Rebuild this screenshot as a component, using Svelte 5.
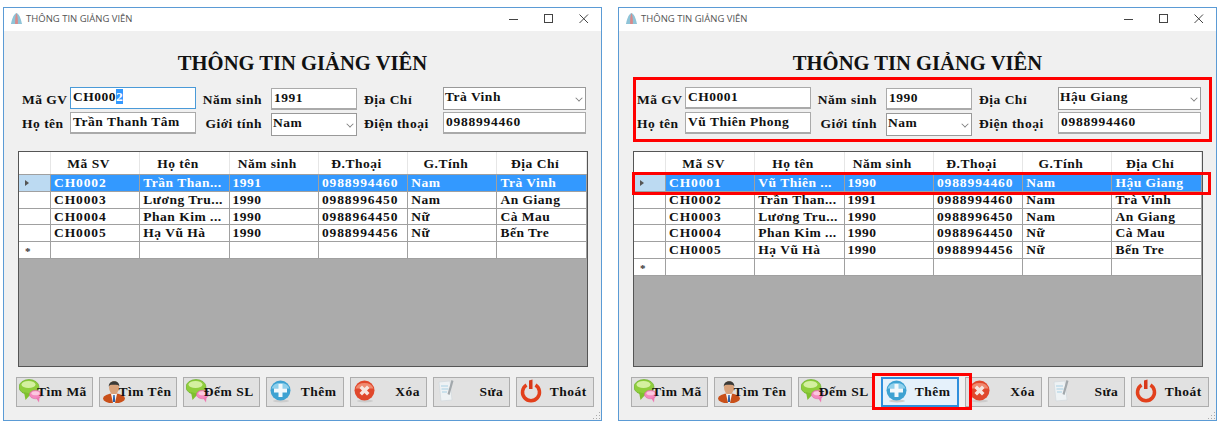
<script lang="ts">
    // Columns of the student grid
    const columns = ["Mã SV", "Họ tên", "Năm sinh", "Đ.Thoại", "G.Tính", "Địa Chỉ"];

    const rowsA = [
        ["CH0002", "Trần Than...", "1991", "0988994460", "Nam", "Trà Vinh"],
        ["CH0003", "Lương Tru...", "1990", "0988996450", "Nam", "An Giang"],
        ["CH0004", "Phan Kim ...", "1990", "0988964450", "Nữ", "Cà Mau"],
        ["CH0005", "Hạ Vũ Hà", "1990", "0988994456", "Nữ", "Bến Tre"],
    ];
    const rowsB = [
        ["CH0001", "Vũ Thiên ...", "1990", "0988994460", "Nam", "Hậu Giang"],
        ["CH0002", "Trần Than...", "1991", "0988994460", "Nam", "Trà Vinh"],
        ["CH0003", "Lương Tru...", "1990", "0988996450", "Nam", "An Giang"],
        ["CH0004", "Phan Kim ...", "1990", "0988964450", "Nữ", "Cà Mau"],
        ["CH0005", "Hạ Vũ Hà", "1990", "0988994456", "Nữ", "Bến Tre"],
    ];

    const buttons = [
        { icon: "chat", label: "Tìm Mã", tight: true },
        { icon: "man", label: "Tìm Tên", tight: true },
        { icon: "chat", label: "Đếm SL", tight: true },
        { icon: "plus", label: "Thêm" },
        { icon: "cross", label: "Xóa" },
        { icon: "note", label: "Sửa" },
        { icon: "power", label: "Thoát" },
    ];

    // phone numbers and codes run a little wider than the rest of the text
    const isWide = (v) => /^(\d{10}|CH\d+)$/.test(v);
</script>

{#snippet icon(name)}
    <svg class="ico" viewBox="0 0 24 24" width="24" height="24">
        {#if name === "chat"}
            <ellipse cx="10" cy="8" rx="10" ry="7.500" fill="#8fce3c" stroke="#5fa81f" stroke-width=".6" />
            <ellipse cx="9.500" cy="5.500" rx="7" ry="3.600" fill="#d4f0a0" />
            <path d="M5 13 L6.500 21 L12 15 Z" fill="#7fc02e" />
            <ellipse cx="16.500" cy="15.500" rx="6" ry="4.300" fill="#f48ac0" stroke="#d9609c" stroke-width=".5" />
            <ellipse cx="16.500" cy="14.200" rx="4" ry="2" fill="#fbc8e0" />
            <path d="M17 19 L20 23.500 L20.500 18 Z" fill="#ee78b2" />
        {:else if name === "man"}
            <ellipse cx="12" cy="19.500" rx="11" ry="5" fill="#c9501a" />
            <path d="M9 15 L15 15 L13 24 L11 24 Z" fill="#f4f4f4" />
            <path d="M11.300 16 L12.700 16 L13.200 23 L10.800 23 Z" fill="#2a5fa8" />
            <ellipse cx="12" cy="8.500" rx="5" ry="6.600" fill="#d9a27a" />
            <path d="M6.800 7.500 C6.500 1 17.500 0 17.400 7.500 L16 6 C13 5.500 10 5.500 8 6 Z" fill="#3a3a38" />
        {:else if name === "plus"}
            <ellipse cx="12" cy="22" rx="8" ry="1.500" fill="#ccc" />
            <circle cx="11.500" cy="11.500" r="10" fill="#3ea2d2" />
            <path d="M2.500 9.500 A9.500 8 0 0 1 20.500 9.500 Z" fill="#8fd0ec" />
            <path d="M9.500 5 h4 v4.500 h4.500 v4 h-4.500 v4.500 h-4 v-4.500 h-4.500 v-4 h4.500 Z" fill="#f2f8fb" />
        {:else if name === "cross"}
            <ellipse cx="12" cy="22" rx="8" ry="1.500" fill="#ccc" />
            <circle cx="11.500" cy="11.500" r="10" fill="#e0482c" />
            <path d="M2.500 9.500 A9.500 8 0 0 1 20.500 9.500 Z" fill="#f08a70" />
            <path d="M6.500 9 L9 6.500 L11.500 9 L14 6.500 L16.500 9 L14 11.500 L16.500 14 L14 16.500 L11.500 14 L9 16.500 L6.500 14 L9 11.500 Z" fill="#f6e6e0" />
        {:else if name === "note"}
            <path d="M3 3 L14 2 L16 21 L5 22 Z" fill="#eef2f4" stroke="#d2dade" stroke-width=".7" />
            <path d="M5 7 H12 M5.500 10 H12.500 M6 13 H11" stroke="#a8d0e4" stroke-width="1" />
            <path d="M15.500 1 L17.500 2 L13.500 16 L11.500 15 Z" fill="#a2a8ac" />
        {:else if name === "power"}
            <path d="M7.500 6 A8.500 8.500 0 1 0 16.500 6" fill="none" stroke="#e2401c" stroke-width="3.500" />
            <path d="M10 1.500 L13.500 0.500 L13.500 10 L10 10 Z" fill="#d8381a" />
        {/if}
    </svg>
{/snippet}

{#snippet win(code, highlight, name, year, city, rows, focused)}
    <section class="window">
        <header class="titlebar">
            <svg class="appicon" viewBox="0 0 14 14" width="13" height="13">
                <path d="M7 1 C3 3 2 9 1 13 H13 C12 9 11 3 7 1 Z" fill="#8fc4d8" />
                <path d="M7 1 C5.500 4 5.500 9 5.500 13 H8.500 C8.500 9 8.500 4 7 1 Z" fill="#d98a8a" />
            </svg>
            <span class="wintitle">THÔNG TIN GIẢNG VIÊN</span>
            <div class="winbtns">
                <svg viewBox="0 0 10 10" width="10" height="10"><path d="M0 5.500 H9" stroke="#444" /></svg>
                <svg viewBox="0 0 10 10" width="10" height="10"><rect x=".5" y=".5" width="8" height="8" fill="none" stroke="#444" /></svg>
                <svg viewBox="0 0 10 10" width="10" height="10"><path d="M.5 .5 L9 9 M9 .5 L.5 9" stroke="#444" /></svg>
            </div>
        </header>

        <div class="body">
            <h1>THÔNG TIN GIẢNG VIÊN</h1>

            <div class="form">
                <span class="lab">Mã GV</span>
                <div class="box" class:focus={highlight}>{code}{#if highlight}<span class="sel">{highlight}</span>{/if}</div>
                <span class="lab right">Năm sinh</span>
                <div class="box low">{year}</div>
                <span class="lab third">Địa Chỉ</span>
                <div class="box combo">{city}<i class="chev"></i></div>

                <span class="lab second">Họ tên</span>
                <div class="box">{name}</div>
                <span class="lab right second">Giới tính</span>
                <div class="box combo low">Nam<i class="chev"></i></div>
                <span class="lab third second">Điện thoại</span>
                <div class="box wide">0988994460</div>
            </div>

            <div class="grid">
                <div class="gridrow head">
                    <div class="rowhead"></div>
                    {#each columns as c}
                        <div class="cell">{c}</div>
                    {/each}
                </div>
                {#each rows as row, i}
                    <div class="gridrow" class:selected={i === 0}>
                        <div class="rowhead">{#if i === 0}<i class="arrow"></i>{/if}</div>
                        {#each row as v}
                            <div class="cell" class:wide={isWide(v)}>{v}</div>
                        {/each}
                    </div>
                {/each}
                <div class="gridrow">
                    <div class="rowhead star">*</div>
                    {#each columns as c}
                        <div class="cell"></div>
                    {/each}
                </div>
            </div>

            <div class="actions">
                {#each buttons as b}
                    <button class:tight={b.tight} class:man={b.icon === "man"} class:focused={focused && b.label === "Thêm"}>
                        {@render icon(b.icon)}
                        <span>{b.label}</span>
                    </button>
                {/each}
            </div>
        </div>

        <svg class="grip" viewBox="0 0 10 10" width="10" height="10">
            <path d="M8 2h1v1H8zM5 5h1v1H5zM8 5h1v1H8zM2 8h1v1H2zM5 8h1v1H5zM8 8h1v1H8z" fill="#aaa" />
        </svg>

        {#if focused}
            <div class="mark mark-form"></div>
            <div class="mark mark-row"></div>
            <div class="mark mark-btn"></div>
        {/if}
    </section>
{/snippet}

<main class="page">
    {@render win("CH000", "2", "Trần Thanh Tâm", "1991", "Trà Vinh", rowsA, false)}
    {@render win("CH0001", "", "Vũ Thiên Phong", "1990", "Hậu Giang", rowsB, true)}
</main>

<style>
    :global(body) {
        margin: 0;
        background: #fff;
    }

    .page {
        display: flex;
        gap: 16px;
        height: 422px;
        padding: 7px 0 0 3px;
        box-sizing: border-box;
        overflow: hidden;
        font-family: "Liberation Serif", serif;
    }

    .window {
        position: relative;
        width: 599px;
        height: 414px;
        flex: none;
        box-sizing: border-box;
        border: 1px solid #5b9bd5;
        background: #f0f0f0;
        display: flex;
        flex-direction: column;
    }

    .titlebar {
        height: 23px;
        flex: none;
        box-sizing: border-box;
        background: #fff;
        display: flex;
        align-items: center;
        padding: 0 0 2px 6px;
        gap: 3px;
    }
    .wintitle {
        font-family: "Open Sans", sans-serif;
        font-size: 9.5px;
        color: #555;
    }
    .winbtns {
        margin-left: auto;
        margin-right: 12px;
        display: flex;
        gap: 25px;
    }

    .body {
        flex: 1;
        display: flex;
        flex-direction: column;
        color: #111;
    }

    h1 {
        margin: 19px 0 0;
        height: 26px;
        text-align: center;
        font-size: 20.6px;
        line-height: 26px;
        font-weight: bold;
        font-family: "Liberation Serif", serif;
    }

    .form {
        margin: 11px 0 0 18px;
        display: grid;
        grid-template-columns: 48px 126px 75px 86px 86px 143px;
        grid-auto-rows: 22px;
        row-gap: 3px;
        align-items: center;
        font-size: 13.5px;
        font-weight: bold;
        letter-spacing: .5px;
    }
    .lab {
        white-space: nowrap;
        padding-top: 4px;
    }
    .lab.second {
        padding-top: 2px;
    }
    .right {
        text-align: right;
        padding-right: 9px;
    }
    .third {
        padding-left: 7px;
    }

    .box {
        position: relative;
        height: 22px;
        box-sizing: border-box;
        border: 1px solid #aaa;
        border-width: 1px 1px 2px 1px;
        background: #fff;
        padding: 0 2px;
        line-height: 18px;
        white-space: nowrap;
    }
    .box.focus {
        border: 1px solid #4a9ad8;
    }
    .box.wide {
        letter-spacing: .75px;
    }
    .low {
        margin-top: 2px;
    }
    .combo {
        border-width: 1px;
        border-color: #999;
        height: 23px;
        padding: 0 1px;
    }
    .sel {
        background: #3399ff;
        color: #fff;
    }
    .chev {
        position: absolute;
        right: 3px;
        top: 7px;
        width: 5px;
        height: 5px;
        border: solid #777;
        border-width: 0 1px 1px 0;
        transform: rotate(45deg) scale(.85);
    }

    .grid {
        margin: 17px 13px 0 14px;
        height: 216px;
        flex: none;
        box-sizing: border-box;
        border: 1px solid #555;
        background: #ababab;
        font-size: 13.5px;
        font-weight: bold;
        letter-spacing: .5px;
    }
    .gridrow {
        display: grid;
        grid-template-columns: 32px repeat(6, 89.3px);
        height: 16.8px;
        line-height: 16px;
        background: #fff;
        box-sizing: border-box;
        border-bottom: 1px solid #a0a0a0;
    }
    .gridrow.head {
        height: 23px;
        line-height: 23px;
        border-bottom: 1px solid #a0a0a0;
    }
    .head .cell {
        text-align: center;
        border-right: 1px solid #e6e6e6;
        padding: 0 13px 0 0;
    }
    .rowhead {
        border-right: 1px solid #a0a0a0;
        position: relative;
        box-sizing: border-box;
    }
    .head .rowhead {
        border-right-color: #e6e6e6;
    }
    .cell {
        padding-left: 3px;
        border-right: 1px solid #a0a0a0;
        box-sizing: border-box;
        white-space: nowrap;
        overflow: hidden;
    }
    .cell.wide {
        letter-spacing: .9px;
    }
    .selected .cell {
        background: #3399ff;
        color: #fff;
    }
    .selected .rowhead {
        background: #bcdaf2;
    }
    .arrow {
        position: absolute;
        left: 6px;
        top: 5px;
        border-left: 4px solid #555;
        border-top: 3.5px solid transparent;
        border-bottom: 3.5px solid transparent;
    }
    .star {
        font-size: 11px;
        color: #333;
        padding: 3px 0 0 6px;
        line-height: 12px;
    }

    .actions {
        margin: 10px 0 0 12px;
        display: flex;
        gap: 6px;
    }
    button {
        width: 77.4px;
        height: 30px;
        box-sizing: border-box;
        padding: 0 6px 0 2px;
        display: flex;
        align-items: center;
        justify-content: space-between;
        background: #e1e1e1;
        border: 1px solid #adadad;
        border-radius: 0;
        color: #111;
        font-family: "Liberation Serif", serif;
        font-size: 13.5px;
        font-weight: bold;
        letter-spacing: .5px;
        white-space: nowrap;
    }
    button.tight {
        justify-content: flex-start;
    }
    button.tight span {
        margin-left: -6px;
        position: relative;
    }
    button.man span {
        margin-left: -8px;
    }
    button.focused {
        background: #e5f1fb;
        border: 2px solid #2f8fdc;
    }
    .ico {
        flex: none;
        margin-bottom: 3px;
    }

    .grip {
        position: absolute;
        right: 0;
        bottom: 0;
    }

    /* red annotations on the second window */
    .mark {
        position: absolute;
        border: 3px solid #f00;
        box-sizing: border-box;
    }
    .mark-form {
        left: 14px;
        top: 69px;
        width: 579px;
        height: 65px;
    }
    .mark-row {
        left: 13px;
        top: 164px;
        width: 579px;
        height: 23px;
    }
    .mark-btn {
        left: 253px;
        top: 365px;
        width: 100px;
        height: 37px;
    }
</style>
